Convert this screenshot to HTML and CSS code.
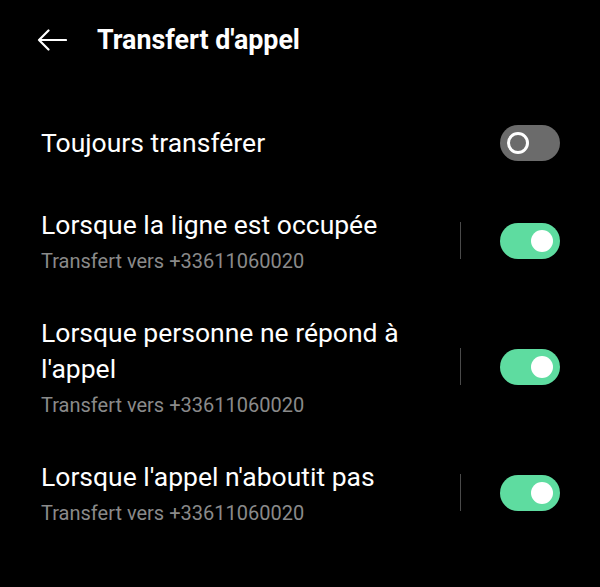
FILE: index.html
```html
<!DOCTYPE html>
<html lang="fr">
  <head>
    <meta charset="UTF-8" />
    <meta name="viewport" content="width=device-width, initial-scale=1.0" />
    <title>Transfert d'appel</title>
    <link rel="stylesheet" href="styles.css">
  </head>
  <body>
    <!-- Top bar -->
    <div class="top-bar">
      <svg class="back" width="30" height="24" viewBox="0 0 30 24">
        <path d="M29 12H2M11.5 2.5L2 12L11.5 21.5" fill="none" stroke="#fff" stroke-width="2.2" stroke-linecap="round" stroke-linejoin="round"/>
      </svg>
      <h1>Transfert d'appel</h1>
    </div>

    <!-- Forwarding options -->
    <ul class="options">
      <li class="option single">
        <div class="text">
          <p class="label">Toujours transférer</p>
        </div>
        <span class="switch"></span>
      </li>
      <li class="option">
        <div class="text">
          <p class="label">Lorsque la ligne est occupée</p>
          <p class="sub">Transfert vers +33611060020</p>
        </div>
        <span class="divider"></span>
        <span class="switch on"></span>
      </li>
      <li class="option">
        <div class="text">
          <p class="label">Lorsque personne ne répond à l'appel</p>
          <p class="sub">Transfert vers +33611060020</p>
        </div>
        <span class="divider"></span>
        <span class="switch on"></span>
      </li>
      <li class="option">
        <div class="text">
          <p class="label">Lorsque l'appel n'aboutit pas</p>
          <p class="sub">Transfert vers +33611060020</p>
        </div>
        <span class="divider"></span>
        <span class="switch on"></span>
      </li>
    </ul>
  </body>
</html>
```

FILE: styles.css
```css
/* Full page */
body {
  margin: 0;
  padding: 0;
  background-color: #000;
  color: #fff;
  font-family: Roboto, "Noto Sans", sans-serif;
}

/* Top bar */
.top-bar {
  display: flex;
  align-items: center;
  height: 80px;
  padding-left: 37px;
}
.top-bar .back {
  display: block;
  margin-right: 30px;
}
.top-bar h1 {
  margin: 0;
  font-size: 26.8px;
  font-weight: bold;
  line-height: 36px;
}

/* Option list */
.options {
  list-style: none;
  margin: 0;
  padding: 25px 40px 0 41px;
}
.option {
  display: flex;
  align-items: center;
  padding: 20px 0 21px;
}
.option.single {
  padding-bottom: 26px;
}
.option .text {
  flex: 1;
  padding-right: 20px;
}
.option .label {
  margin: 0;
  font-size: 26.5px;
  line-height: 36px;
}
.option .sub {
  margin: 5px 0 0;
  font-size: 20px;
  line-height: 26px;
  color: #8a8a8a;
}

/* Vertical separator */
.divider {
  width: 1px;
  height: 37px;
  background-color: #4a4a4a;
  margin-right: 39px;
}

/* Switches */
.switch {
  position: relative;
  width: 60px;
  height: 36px;
  border-radius: 18px;
  background-color: #6b6b6b;
}
.switch::after {
  content: "";
  position: absolute;
  top: 7px;
  left: 7px;
  width: 16px;
  height: 16px;
  border: 3px solid #fff;
  border-radius: 50%;
}
.switch.on {
  background-color: #5edca0;
}
.switch.on::after {
  top: 7px;
  left: 31px;
  width: 22px;
  height: 22px;
  border: 0;
  background-color: #fff;
}
```
